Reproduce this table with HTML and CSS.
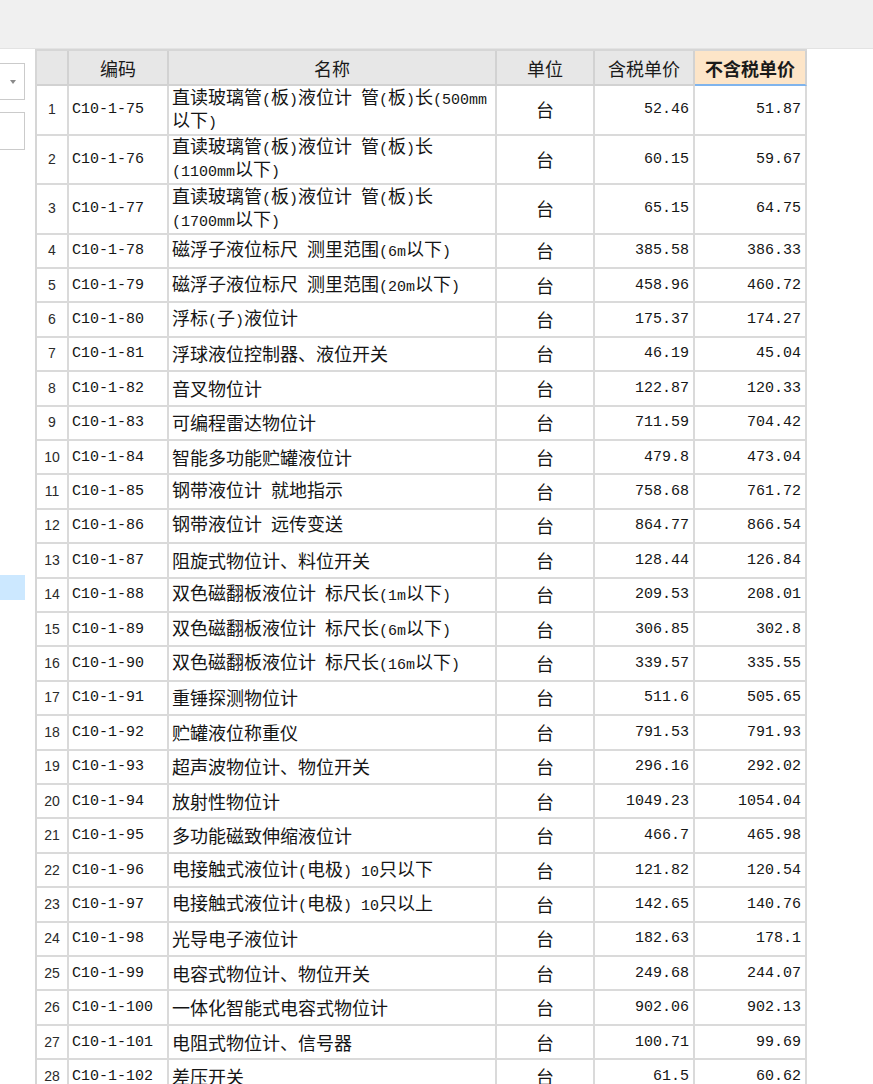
FILE: index.html
```html
<!DOCTYPE html>
<html lang="zh-CN">
<head>
<meta charset="utf-8">
<title>定额单价</title>
<link rel="stylesheet" href="styles.css">
</head>
<body>
<div class="topbar"></div>
<div class="main">
  <aside class="side">
    <div class="combo"><span class="arrow"></span></div>
    <div class="field"></div>
    <div class="sel"></div>
  </aside>
  <table class="grid">
    <colgroup>
      <col class="c-no"><col class="c-code"><col class="c-name"><col class="c-unit"><col class="c-tax"><col class="c-notax">
    </colgroup>
    <thead>
      <tr><th></th><th>编码</th><th>名称</th><th>单位</th><th>含税单价</th><th class="hl">不含税单价</th></tr>
    </thead>
    <tbody>
      <tr class="tall"><td class="no">1</td><td class="code">C10-1-75</td><td class="name">直读玻璃管<span class="a">(</span>板<span class="a">)</span>液位计<span class="a"> </span>管<span class="a">(</span>板<span class="a">)</span>长<span class="a">(500mm</span><br>以下<span class="a">)</span></td><td class="unit">台</td><td class="num">52.46</td><td class="num">51.87</td></tr>
      <tr class="tall"><td class="no">2</td><td class="code">C10-1-76</td><td class="name">直读玻璃管<span class="a">(</span>板<span class="a">)</span>液位计<span class="a"> </span>管<span class="a">(</span>板<span class="a">)</span>长<br><span class="a">(1100mm</span>以下<span class="a">)</span></td><td class="unit">台</td><td class="num">60.15</td><td class="num">59.67</td></tr>
      <tr class="tall"><td class="no">3</td><td class="code">C10-1-77</td><td class="name">直读玻璃管<span class="a">(</span>板<span class="a">)</span>液位计<span class="a"> </span>管<span class="a">(</span>板<span class="a">)</span>长<br><span class="a">(1700mm</span>以下<span class="a">)</span></td><td class="unit">台</td><td class="num">65.15</td><td class="num">64.75</td></tr>
      <tr><td class="no">4</td><td class="code">C10-1-78</td><td class="name">磁浮子液位标尺<span class="a"> </span>测里范围<span class="a">(6m</span>以下<span class="a">)</span></td><td class="unit">台</td><td class="num">385.58</td><td class="num">386.33</td></tr>
      <tr><td class="no">5</td><td class="code">C10-1-79</td><td class="name">磁浮子液位标尺<span class="a"> </span>测里范围<span class="a">(20m</span>以下<span class="a">)</span></td><td class="unit">台</td><td class="num">458.96</td><td class="num">460.72</td></tr>
      <tr><td class="no">6</td><td class="code">C10-1-80</td><td class="name">浮标<span class="a">(</span>子<span class="a">)</span>液位计</td><td class="unit">台</td><td class="num">175.37</td><td class="num">174.27</td></tr>
      <tr><td class="no">7</td><td class="code">C10-1-81</td><td class="name">浮球液位控制器、液位开关</td><td class="unit">台</td><td class="num">46.19</td><td class="num">45.04</td></tr>
      <tr><td class="no">8</td><td class="code">C10-1-82</td><td class="name">音叉物位计</td><td class="unit">台</td><td class="num">122.87</td><td class="num">120.33</td></tr>
      <tr><td class="no">9</td><td class="code">C10-1-83</td><td class="name">可编程雷达物位计</td><td class="unit">台</td><td class="num">711.59</td><td class="num">704.42</td></tr>
      <tr><td class="no">10</td><td class="code">C10-1-84</td><td class="name">智能多功能贮罐液位计</td><td class="unit">台</td><td class="num">479.8</td><td class="num">473.04</td></tr>
      <tr><td class="no">11</td><td class="code">C10-1-85</td><td class="name">钢带液位计<span class="a"> </span>就地指示</td><td class="unit">台</td><td class="num">758.68</td><td class="num">761.72</td></tr>
      <tr><td class="no">12</td><td class="code">C10-1-86</td><td class="name">钢带液位计<span class="a"> </span>远传变送</td><td class="unit">台</td><td class="num">864.77</td><td class="num">866.54</td></tr>
      <tr><td class="no">13</td><td class="code">C10-1-87</td><td class="name">阻旋式物位计、料位开关</td><td class="unit">台</td><td class="num">128.44</td><td class="num">126.84</td></tr>
      <tr><td class="no">14</td><td class="code">C10-1-88</td><td class="name">双色磁翻板液位计<span class="a"> </span>标尺长<span class="a">(1m</span>以下<span class="a">)</span></td><td class="unit">台</td><td class="num">209.53</td><td class="num">208.01</td></tr>
      <tr><td class="no">15</td><td class="code">C10-1-89</td><td class="name">双色磁翻板液位计<span class="a"> </span>标尺长<span class="a">(6m</span>以下<span class="a">)</span></td><td class="unit">台</td><td class="num">306.85</td><td class="num">302.8</td></tr>
      <tr><td class="no">16</td><td class="code">C10-1-90</td><td class="name">双色磁翻板液位计<span class="a"> </span>标尺长<span class="a">(16m</span>以下<span class="a">)</span></td><td class="unit">台</td><td class="num">339.57</td><td class="num">335.55</td></tr>
      <tr><td class="no">17</td><td class="code">C10-1-91</td><td class="name">重锤探测物位计</td><td class="unit">台</td><td class="num">511.6</td><td class="num">505.65</td></tr>
      <tr><td class="no">18</td><td class="code">C10-1-92</td><td class="name">贮罐液位称重仪</td><td class="unit">台</td><td class="num">791.53</td><td class="num">791.93</td></tr>
      <tr><td class="no">19</td><td class="code">C10-1-93</td><td class="name">超声波物位计、物位开关</td><td class="unit">台</td><td class="num">296.16</td><td class="num">292.02</td></tr>
      <tr><td class="no">20</td><td class="code">C10-1-94</td><td class="name">放射性物位计</td><td class="unit">台</td><td class="num">1049.23</td><td class="num">1054.04</td></tr>
      <tr><td class="no">21</td><td class="code">C10-1-95</td><td class="name">多功能磁致伸缩液位计</td><td class="unit">台</td><td class="num">466.7</td><td class="num">465.98</td></tr>
      <tr><td class="no">22</td><td class="code">C10-1-96</td><td class="name">电接触式液位计<span class="a">(</span>电极<span class="a">) 10</span>只以下</td><td class="unit">台</td><td class="num">121.82</td><td class="num">120.54</td></tr>
      <tr><td class="no">23</td><td class="code">C10-1-97</td><td class="name">电接触式液位计<span class="a">(</span>电极<span class="a">) 10</span>只以上</td><td class="unit">台</td><td class="num">142.65</td><td class="num">140.76</td></tr>
      <tr><td class="no">24</td><td class="code">C10-1-98</td><td class="name">光导电子液位计</td><td class="unit">台</td><td class="num">182.63</td><td class="num">178.1</td></tr>
      <tr><td class="no">25</td><td class="code">C10-1-99</td><td class="name">电容式物位计、物位开关</td><td class="unit">台</td><td class="num">249.68</td><td class="num">244.07</td></tr>
      <tr><td class="no">26</td><td class="code">C10-1-100</td><td class="name">一体化智能式电容式物位计</td><td class="unit">台</td><td class="num">902.06</td><td class="num">902.13</td></tr>
      <tr><td class="no">27</td><td class="code">C10-1-101</td><td class="name">电阻式物位计、信号器</td><td class="unit">台</td><td class="num">100.71</td><td class="num">99.69</td></tr>
      <tr><td class="no">28</td><td class="code">C10-1-102</td><td class="name">差压开关</td><td class="unit">台</td><td class="num">61.5</td><td class="num">60.62</td></tr>
    </tbody>
  </table>
</div>
</body>
</html>
```

FILE: styles.css
```css
* { box-sizing: border-box; }
html, body { margin: 0; padding: 0; height: 100%; overflow: hidden; background: #fff; }
body { font-family: "Noto Sans CJK SC", sans-serif; color: #111; }

.topbar { height: 49px; background: #f0f0f0; border-bottom: 1px solid #e3e3e3; }

.main { display: flex; align-items: flex-start; }

.side { width: 35px; flex: none; display: flex; flex-direction: column; padding-top: 14px; }
.combo { width: 27px; height: 37px; margin-left: -2px; border: 1px solid #cbcbcb; display: flex; align-items: center; justify-content: flex-end; padding-right: 8px; }
.arrow { width: 0; height: 0; border-left: 3.5px solid transparent; border-right: 3.5px solid transparent; border-top: 4px solid #8a8a8a; }
.field { width: 27px; height: 38px; margin-left: -2px; margin-top: 12px; border: 1px solid #cbcbcb; }
.sel { width: 25px; height: 25px; margin-top: 425px; background: #cce8ff; }

.grid { flex: none; width: 772px; table-layout: fixed; border-collapse: separate; border-spacing: 0; border-top: 2px solid #d6d6d6; border-left: 2px solid #d6d6d6; }
.c-no { width: 32px; }
.c-code { width: 100px; }
.c-name { width: 328px; }
.c-unit { width: 98px; }
.c-tax { width: 100px; }
.c-notax { width: 112px; }

.grid th, .grid td { border-right: 2px solid #dadada; border-bottom: 2px solid #dadada; padding: 0 3px; white-space: nowrap; overflow: hidden; vertical-align: middle; }
.grid th { height: 35px; background: #e7e7e7; font-weight: normal; font-size: 18px; line-height: 20px; text-align: center; color: #1a1a1a; border-bottom-color: #d2d2d2; border-right-color: #d2d2d2; }
.grid th.hl { background: #fde5c8; font-weight: bold; border-bottom-color: #80b4ec; }

.grid td { height: 34.42px; font-size: 18px; line-height: 19px; color: #151515; }
.grid tr.tall td { height: 49.5px; }

.grid td.no { text-align: center; font-family: "Liberation Sans", sans-serif; font-size: 14px; color: #2a2a2a; padding: 0; }
.grid td.code { font-family: "Liberation Mono", monospace; font-size: 15px; padding-left: 3px; }
.grid td.name { padding-left: 3px; }
.a { font-family: "Liberation Mono", monospace; font-size: 15px; line-height: 19px; }
.grid td.unit { text-align: center; }
.grid td.num { text-align: right; font-family: "Liberation Mono", monospace; font-size: 15px; padding-right: 4px; }
```
